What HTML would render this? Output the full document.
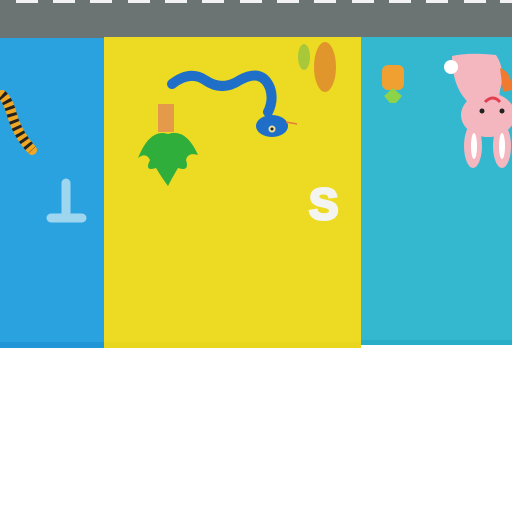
<!DOCTYPE html>
<html><head><style>
html,body{margin:0;padding:0;width:512px;height:512px;background:#fff;overflow:hidden;position:relative}
div{position:absolute}
</style></head><body>
<div style="left:0;top:0;width:512px;height:38px;background:#6b7373"></div>
<svg style="position:absolute;left:0;top:0" width="512" height="6">
<g fill="#f2f2f4">
<rect x="16" y="0" width="22" height="3"/><rect x="53" y="0" width="22" height="3"/><rect x="90" y="0" width="22" height="3"/><rect x="128" y="0" width="22" height="3"/><rect x="165" y="0" width="22" height="3"/><rect x="202" y="0" width="22" height="3"/><rect x="240" y="0" width="22" height="3"/><rect x="277" y="0" width="22" height="3"/><rect x="314" y="0" width="22" height="3"/><rect x="352" y="0" width="22" height="3"/><rect x="389" y="0" width="22" height="3"/><rect x="426" y="0" width="22" height="3"/><rect x="464" y="0" width="22" height="3"/><rect x="500" y="0" width="12" height="3"/>
</g></svg>
<div style="left:0;top:38px;width:104px;height:310px;background:#2aa2e0"></div>
<div style="left:104px;top:37px;width:257px;height:311px;background:#ecdb22"></div>
<div style="left:361px;top:37px;width:151px;height:308px;background:#33b8d0"></div>
<div style="left:0;top:342px;width:104px;height:6px;background:#2196d6"></div>
<div style="left:104px;top:342px;width:257px;height:6px;background:#e9d61e"></div>
<div style="left:361px;top:340px;width:151px;height:5px;background:#2aaec8"></div>
<svg style="position:absolute;left:0;top:0" width="512" height="512">
<path d="M2 95 Q8 100 12 115 Q18 135 32 150" stroke="#f0a824" stroke-width="10" fill="none" stroke-linecap="round"/>
<path d="M2 95 Q8 100 12 115 Q18 135 32 150" stroke="#222" stroke-width="10" fill="none" stroke-dasharray="3 4"/>
<path d="M66 183 V218 M51 218 H82" stroke="#9fd6ef" stroke-width="9" stroke-linecap="round" fill="none"/>
<rect x="158" y="104" width="16" height="28" fill="#e49a48"/>
<path d="M138 158 Q150 128 168 134 Q186 128 198 155 Q188 152 186 160 Q190 172 178 168 Q172 178 168 186 Q162 178 156 168 Q144 172 150 160 Q146 152 138 158Z" fill="#2fae3c"/>
<path d="M172 84 Q190 70 205 80 Q222 92 240 80 Q262 68 270 88 Q274 100 268 112" stroke="#1f6fc8" stroke-width="10" fill="none" stroke-linecap="round"/>
<ellipse cx="272" cy="126" rx="16" ry="11" fill="#1f6fc8"/>
<circle cx="272" cy="129" r="3.5" fill="#e8e0a0"/><circle cx="272" cy="129" r="1.5" fill="#222"/>
<path d="M286 122 L297 124" stroke="#e87a3a" stroke-width="1.5"/>
<ellipse cx="304" cy="57" rx="6" ry="13" fill="#a8c83a"/>
<ellipse cx="325" cy="67" rx="11" ry="25" fill="#e0962a"/>
<text x="309" y="219" font-family="Liberation Sans, sans-serif" font-weight="bold" font-size="44" fill="#f4f4f0" stroke="#f4f4f0" stroke-width="3">S</text>
<rect x="382" y="65" width="22" height="25" rx="6" fill="#f0a030"/>
<path d="M384 96 L393 88 L402 96 L396 103 H390Z" fill="#8cd34a"/>
<path d="M452 56 Q470 52 496 55 Q506 70 500 90 Q498 115 480 120 Q470 105 462 95 Q452 80 452 56Z" fill="#f5b7bf"/>
<circle cx="451" cy="67" r="7" fill="#fff"/>
<path d="M500 68 Q512 72 512 90 L503 92Z" fill="#f07a30"/>
<ellipse cx="488" cy="115" rx="27" ry="22" fill="#f5b7bf"/>
<circle cx="482" cy="111" r="2.5" fill="#222"/><circle cx="502" cy="111" r="2.5" fill="#222"/>
<path d="M485 102 Q493 94 500 102" stroke="#e04050" stroke-width="3" fill="none"/>
<ellipse cx="473" cy="146" rx="9" ry="22" fill="#f5b7bf"/>
<ellipse cx="502" cy="146" rx="9" ry="22" fill="#f5b7bf"/>
<ellipse cx="474" cy="146" rx="3" ry="13" fill="#fff"/>
<ellipse cx="502" cy="146" rx="3" ry="13" fill="#fff"/>
</svg>
</body></html>
